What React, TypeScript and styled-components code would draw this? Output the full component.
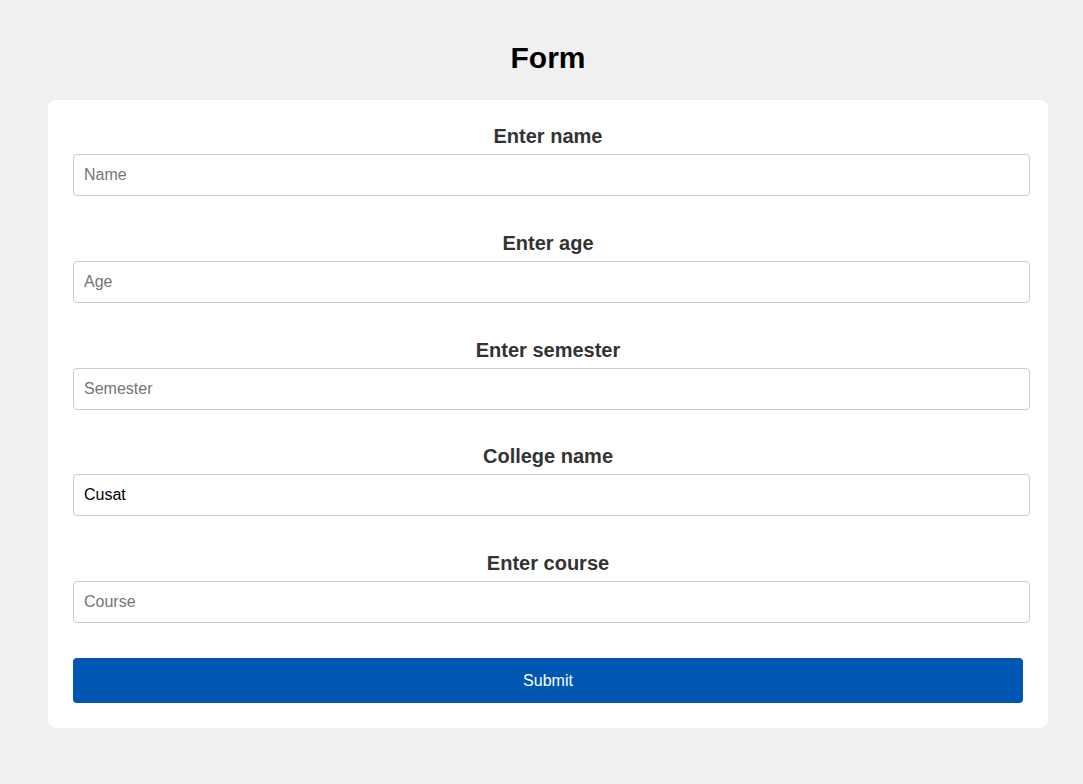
import React from "react";
import styled, { createGlobalStyle } from "styled-components";

const Global = createGlobalStyle`
  html, body { margin: 0; padding: 0; background: #f0f0f0; }
  body { font-family: "Liberation Sans", Arial, sans-serif; }
  * { box-sizing: border-box; }
`;

const Page = styled.div`
  padding: 39px 35px 56px 48px;
  display: flex;
  flex-direction: column;
  align-items: stretch;
`;

const Title = styled.h1`
  width: 1000px;
  margin: 0 0 24px;
  font-size: 30px;
  line-height: 37px;
  font-weight: 700;
  color: #000;
  text-align: center;
`;

const Card = styled.form`
  width: 1000px;
  background: #fff;
  border-radius: 8px;
  padding: 25px;
  display: flex;
  flex-direction: column;
  gap: 35.75px;
`;

const Field = styled.div`
  display: flex;
  flex-direction: column;
  gap: 6px;
`;

const Label = styled.label`
  font-size: 20px;
  line-height: 23px;
  font-weight: 700;
  color: #333;
  text-align: center;
`;

const Input = styled.input`
  width: calc(100% + 7px);
  height: 42px;
  padding: 0 10px;
  border: 1px solid #ccc;
  border-radius: 4px;
  font-family: "Liberation Sans", Arial, sans-serif;
  font-size: 16px;
  color: #000;
  outline: none;
  &::placeholder { color: #757575; }
`;

const Button = styled.button`
  margin-top: -1px;
  height: 45px;
  width: 100%;
  padding: 2px 0 0;
  border: none;
  border-radius: 4px;
  background: #0056b3;
  color: #fff;
  font-family: "Liberation Sans", Arial, sans-serif;
  font-size: 16px;
  cursor: pointer;
`;

const fields = [
  { label: "Enter name", placeholder: "Name", value: "" },
  { label: "Enter age", placeholder: "Age", value: "" },
  { label: "Enter semester", placeholder: "Semester", value: "" },
  { label: "College name", placeholder: "College", value: "Cusat" },
  { label: "Enter course", placeholder: "Course", value: "" },
];

export default function App() {
  return (
    <>
      <Global />
      <Page>
        <Title>Form</Title>
        <Card onSubmit={(e) => e.preventDefault()}>
          {fields.map((f) => (
            <Field key={f.label}>
              <Label>{f.label}</Label>
              <Input placeholder={f.placeholder} defaultValue={f.value} />
            </Field>
          ))}
          <Button type="submit">Submit</Button>
        </Card>
      </Page>
    </>
  );
}
